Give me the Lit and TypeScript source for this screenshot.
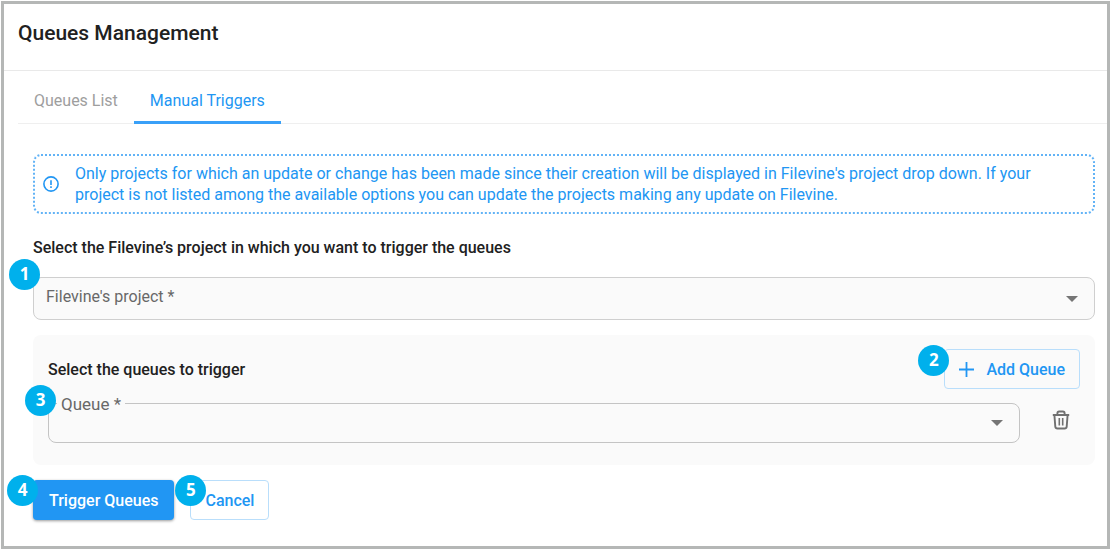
import { LitElement, html, css, svg } from "lit";
import { customElement, property, state } from "lit/decorators.js";
import { classMap } from "lit/directives/class-map.js";

@customElement("step-badge")
class StepBadge extends LitElement {
  @property({ type: Number }) step = 1;

  static styles = css`
    :host {
      position: absolute;
      display: flex;
      align-items: center;
      justify-content: center;
      width: 31px;
      height: 31px;
      box-sizing: border-box;
      padding-bottom: 2px;
      border-radius: 50%;
      background: #00b0ec;
      color: #fff;
      font: 700 17px/20px "Open Sans", sans-serif;
      pointer-events: none;
      z-index: 2;
    }
  `;

  render() {
    return html`${this.step}`;
  }
}

const arrow = svg`<path d="M0 0h12l-6 6z" fill="#757575" />`;

@customElement("app-root")
class AppRoot extends LitElement {
  @state() private tab = 1;

  static styles = css`
    :host {
      display: block;
      box-sizing: border-box;
      min-height: 100vh;
      padding: 1px 1px 0;
      background: #fff;
      color: #212121;
      font-family: Roboto, sans-serif;
      font-size: 16px;
      line-height: 21px;
    }
    * {
      box-sizing: border-box;
    }
    .frame {
      min-height: calc(100vh - 1px);
      border: 3px solid #b5b7b6;
      background: #fff;
    }
    header {
      padding: 15px 14px 23px;
      border-bottom: 1px solid #e9e9e9;
    }
    h1 {
      margin: 0;
      font-size: 21px;
      font-weight: 500;
      line-height: 28px;
    }
    h2 {
      margin: 0;
      font-size: 16px;
      font-weight: 500;
      line-height: 21px;
    }
    .tabs {
      display: flex;
      margin: 5px 0 0 14px;
      border-bottom: 1px solid #efefef;
    }
    .tab {
      margin-bottom: -1px;
      padding: 14px 16px 10px;
      border: 0;
      border-bottom: 3px solid transparent;
      background: none;
      color: #9e9e9e;
      font: inherit;
      cursor: pointer;
    }
    .tab.active {
      border-color: #39a0f8;
      color: #2196f3;
    }
    main {
      padding: 30px 12px 25px 29px;
    }
    .notice {
      display: flex;
      align-items: center;
      gap: 16px;
      padding: 7px 24px 7px 8px;
      border: 2px dotted #62b3f6;
      border-radius: 8px;
      color: #2196f3;
    }
    .notice svg {
      flex: none;
    }
    .notice p {
      margin: 0;
    }
    .project-title {
      margin-top: 23px;
    }
    .field {
      position: relative;
      flex: 1;
    }
    .field svg {
      position: absolute;
      right: 17px;
      top: 50%;
      margin-top: -3px;
      pointer-events: none;
    }
    .field label {
      position: absolute;
      left: 13px;
      top: 9px;
      color: #686868;
      pointer-events: none;
    }
    .project {
      margin-top: 19px;
    }
    select {
      display: block;
      width: 100%;
      height: 43px;
      padding: 0 40px 0 13px;
      border: 1px solid #cfcfcf;
      border-radius: 8px;
      appearance: none;
      background: #fafafa;
      color: #212121;
      font: inherit;
    }
    .panel {
      margin-top: 15px;
      padding: 14px 15px 22px;
      border-radius: 8px;
      background: #fafafa;
    }
    .panel-head {
      display: flex;
      align-items: center;
      justify-content: space-between;
    }
    .queue-row {
      display: flex;
      align-items: center;
      margin-top: 14px;
    }
    .queue select {
      height: 40px;
      border-color: #c4c4c4;
    }
    .queue label {
      left: 9px;
      top: -9px;
      padding: 0 4px;
      background: #fafafa;
      font-size: 17px;
    }
    .btn {
      display: block;
      height: 40px;
      padding: 0 14px;
      border: 1px solid #b9defb;
      border-radius: 4px;
      background: #fff;
      color: #2196f3;
      font: inherit;
      font-weight: 500;
      cursor: pointer;
    }
    .btn.add {
      display: flex;
      align-items: center;
      gap: 12px;
      background: none;
    }
    .btn.primary {
      padding: 0 16px;
      border: 0;
      background: #2196f3;
      color: #fff;
      box-shadow: 0 1px 3px rgba(0, 0, 0, 0.4);
    }
    .delete {
      display: flex;
      margin: 0 8px 6px 30px;
      padding: 0;
      border: 0;
      background: none;
      cursor: pointer;
    }
    .marked {
      position: relative;
    }
    .actions {
      display: flex;
      gap: 16px;
      margin-top: 15px;
    }
    .at-project {
      left: -24px;
      top: -18px;
    }
    .at-add {
      left: -26px;
      top: -4px;
    }
    .at-queue {
      left: -23px;
      top: -18px;
    }
    .at-trigger {
      left: -26px;
      top: -5px;
    }
    .at-cancel {
      left: -15px;
      top: -5px;
    }
  `;

  render() {
    return html`
      <div class="frame">
        <header><h1>Queues Management</h1></header>
        <div class="tabs" role="tablist">
          ${["Queues List", "Manual Triggers"].map(
            (name, i) => html`<button
              role="tab"
              aria-selected=${this.tab === i ? "true" : "false"}
              class=${classMap({ tab: true, active: this.tab === i })}
              @click=${() => (this.tab = i)}
            >${name}</button>`
          )}
        </div>
        <main>
          <div class="notice">
            <svg width="16" height="16" viewBox="0 0 16 16" fill="none" stroke="#2196f3" stroke-width="1.6">
              <circle cx="8" cy="8" r="7.1" />
              <path d="M8 4.2v4.7M8 10.2v1.7" />
            </svg>
            <p>
              Only projects for which an update or change has been made since their creation will be displayed in
              Filevine's project drop down. If your project is not listed among the available options you can update
              the projects making any update on Filevine.
            </p>
          </div>
          <h2 class="project-title">Select the Filevine’s project in which you want to trigger the queues</h2>
          <div class="field project">
            <select id="project" required><option value=""></option></select>
            <label for="project">Filevine's project *</label>
            <svg width="12" height="6" viewBox="0 0 12 6">${arrow}</svg>
            <step-badge class="at-project" .step=${1}></step-badge>
          </div>
          <section class="panel">
            <div class="panel-head">
              <h2>Select the queues to trigger</h2>
              <div class="marked">
                <button class="btn add">
                  <svg width="15" height="15" viewBox="0 0 15 15" stroke="#2196f3" stroke-width="1.8">
                    <path d="M7.5 0v15M0 7.5h15" />
                  </svg>
                  Add Queue
                </button>
                <step-badge class="at-add" .step=${2}></step-badge>
              </div>
            </div>
            <div class="queue-row">
              <div class="field queue">
                <select id="queue" required><option value=""></option></select>
                <label for="queue">Queue *</label>
                <svg width="12" height="6" viewBox="0 0 12 6">${arrow}</svg>
                <step-badge class="at-queue" .step=${3}></step-badge>
              </div>
              <button class="delete" aria-label="Delete queue">
                <svg width="22" height="20" viewBox="0 0 22 20" fill="none" stroke="#707070" stroke-width="1.9">
                  <path d="M2.8 5h16.4M7.4 5V3.2Q7.4 1.5 9.1 1.5h3.8q1.7 0 1.7 1.7V5" />
                  <path d="M4.4 5l.9 11.6Q5.5 18.5 7.4 18.5h7.2q1.9 0 2.1-1.9L17.6 5" />
                  <path d="M9.3 8v7.4M12.7 8v7.4" stroke-width="1.6" />
                </svg>
              </button>
            </div>
          </section>
          <div class="actions">
            <div class="marked">
              <button class="btn primary">Trigger Queues</button>
              <step-badge class="at-trigger" .step=${4}></step-badge>
            </div>
            <div class="marked">
              <button class="btn">Cancel</button>
              <step-badge class="at-cancel" .step=${5}></step-badge>
            </div>
          </div>
        </main>
      </div>
    `;
  }
}
